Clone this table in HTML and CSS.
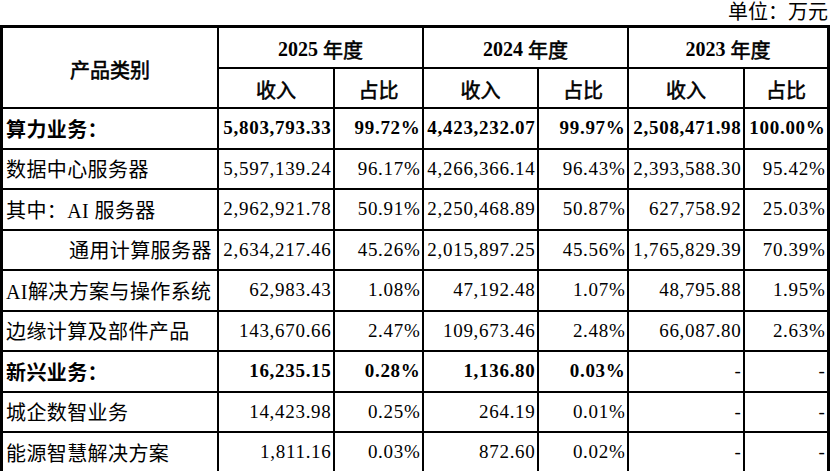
FILE: index.html
```html
<!DOCTYPE html>
<html lang="zh-CN">
<head>
<meta charset="utf-8">
<title>产品类别收入</title>
<link rel="stylesheet" href="styles.css">
</head>
<body>
<div class="unit">单位：万元</div>
<div class="grid">
  <div class="c hd cat">产品类别</div>
  <div class="c hd span2"><span class="yr">2025</span>&nbsp;年度</div>
  <div class="c hd span2"><span class="yr">2024</span>&nbsp;年度</div>
  <div class="c hd span2"><span class="yr">2023</span>&nbsp;年度</div>
  <div class="c hd">收入</div>
  <div class="c hd">占比</div>
  <div class="c hd">收入</div>
  <div class="c hd">占比</div>
  <div class="c hd">收入</div>
  <div class="c hd">占比</div>

  <div class="c lbl b">算力业务：</div>
  <div class="c num b">5,803,793.33</div>
  <div class="c num b">99.72%</div>
  <div class="c num b">4,423,232.07</div>
  <div class="c num b">99.97%</div>
  <div class="c num b">2,508,471.98</div>
  <div class="c num b">100.00%</div>

  <div class="c lbl">数据中心服务器</div>
  <div class="c num">5,597,139.24</div>
  <div class="c num">96.17%</div>
  <div class="c num">4,266,366.14</div>
  <div class="c num">96.43%</div>
  <div class="c num">2,393,588.30</div>
  <div class="c num">95.42%</div>

  <div class="c lbl">其中：AI 服务器</div>
  <div class="c num">2,962,921.78</div>
  <div class="c num">50.91%</div>
  <div class="c num">2,250,468.89</div>
  <div class="c num">50.87%</div>
  <div class="c num">627,758.92</div>
  <div class="c num">25.03%</div>

  <div class="c lbl ind">通用计算服务器</div>
  <div class="c num">2,634,217.46</div>
  <div class="c num">45.26%</div>
  <div class="c num">2,015,897.25</div>
  <div class="c num">45.56%</div>
  <div class="c num">1,765,829.39</div>
  <div class="c num">70.39%</div>

  <div class="c lbl">AI解决方案与操作系统</div>
  <div class="c num">62,983.43</div>
  <div class="c num">1.08%</div>
  <div class="c num">47,192.48</div>
  <div class="c num">1.07%</div>
  <div class="c num">48,795.88</div>
  <div class="c num">1.95%</div>

  <div class="c lbl">边缘计算及部件产品</div>
  <div class="c num">143,670.66</div>
  <div class="c num">2.47%</div>
  <div class="c num">109,673.46</div>
  <div class="c num">2.48%</div>
  <div class="c num">66,087.80</div>
  <div class="c num">2.63%</div>

  <div class="c lbl b">新兴业务：</div>
  <div class="c num b">16,235.15</div>
  <div class="c num b">0.28%</div>
  <div class="c num b">1,136.80</div>
  <div class="c num b">0.03%</div>
  <div class="c num">-</div>
  <div class="c num">-</div>

  <div class="c lbl">城企数智业务</div>
  <div class="c num">14,423.98</div>
  <div class="c num">0.25%</div>
  <div class="c num">264.19</div>
  <div class="c num">0.01%</div>
  <div class="c num">-</div>
  <div class="c num">-</div>

  <div class="c lbl">能源智慧解决方案</div>
  <div class="c num">1,811.16</div>
  <div class="c num">0.03%</div>
  <div class="c num">872.60</div>
  <div class="c num">0.02%</div>
  <div class="c num">-</div>
  <div class="c num">-</div>
</div>
</body>
</html>
```

FILE: styles.css
```css
html, body {
  margin: 0;
  padding: 0;
  background: #fff;
}
body {
  width: 831px;
  height: 471px;
  overflow: hidden;
  font-family: "Liberation Serif", "Noto Sans CJK SC", serif;
  color: #000;
}
.unit {
  height: 25px;
  line-height: 24px;
  font-size: 20px;
  text-align: right;
  padding-right: 3px;
  box-sizing: border-box;
  width: 831px;
}
.grid {
  display: grid;
  width: 830px;
  box-sizing: border-box;
  background: #000;
  padding: 3px 3px 0 3px;
  gap: 2px;
  grid-template-columns: 214px 114px 87px 113px 88px 114px 82px;
  grid-template-rows: 39px 38px repeat(9, 38.5px);
}
.c {
  background: #fff;
  display: flex;
  align-items: center;
  white-space: nowrap;
  overflow: hidden;
}
.hd {
  justify-content: center;
  font-size: 20px;
  font-weight: normal;
  -webkit-text-stroke: 0.55px #000;
  padding-top: 3px;
}
.yr {
  font-weight: bold;
  -webkit-text-stroke: 0;
}
.cat {
  grid-row: span 2;
}
.span2 {
  grid-column: span 2;
}
.lbl {
  font-size: 20px;
  padding-left: 3px;
  letter-spacing: 0.4px;
}
.ind {
  padding-left: 66px;
}
.num {
  font-size: 19px;
  letter-spacing: 0.7px;
  justify-content: flex-end;
  padding-right: 1.5px;
}
.b {
  font-weight: bold;
}
```
